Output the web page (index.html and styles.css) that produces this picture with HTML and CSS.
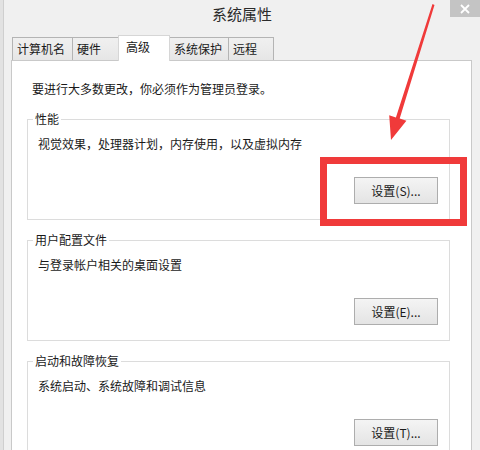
FILE: index.html
```html
<!DOCTYPE html>
<html lang="zh-CN">
<head>
<meta charset="utf-8">
<title>系统属性</title>
<link rel="stylesheet" href="styles.css">
</head>
<body>
<div class="screen">
  <div class="behind"></div>
  <div class="window">
    <div class="titlebar">
      <span></span>
      <div class="title">系统属性</div>
      <div class="close">
        <svg width="10" height="10" viewBox="0 0 10 10"><path d="M1 1L9 9M9 1L1 9" stroke="#fff" stroke-width="1.8" fill="none"/></svg>
      </div>
    </div>
    <div class="content">
      <div class="tabs">
        <div class="tab tab-name">计算机名</div>
        <div class="tab tab-hw">硬件</div>
        <div class="tab tab-adv active">高级</div>
        <div class="tab tab-prot">系统保护</div>
        <div class="tab tab-remote">远程</div>
      </div>
      <div class="panel">
        <p class="note">要进行大多数更改，你必须作为管理员登录。</p>
        <fieldset class="group">
          <legend>性能</legend>
          <p class="desc">视觉效果，处理器计划，内存使用，以及虚拟内存</p>
          <div class="actions"><button class="btn">设置(S)...</button></div>
        </fieldset>
        <fieldset class="group">
          <legend>用户配置文件</legend>
          <p class="desc">与登录帐户相关的桌面设置</p>
          <div class="actions"><button class="btn">设置(E)...</button></div>
        </fieldset>
        <fieldset class="group">
          <legend>启动和故障恢复</legend>
          <p class="desc">系统启动、系统故障和调试信息</p>
          <div class="actions"><button class="btn">设置(T)...</button></div>
        </fieldset>
      </div>
    </div>
  </div>
  <div class="highlight"></div>
  <svg class="arrow" width="480" height="450" viewBox="0 0 480 450">
    <polygon points="432.5,4 434.5,5 399.7,118.6 406.4,120.7 391,140 389.2,115.3 395.9,117.4" fill="#f03a3a"/>
  </svg>
</div>
</body>
</html>
```
FILE: styles.css
```css
* { box-sizing: border-box; }
html, body { margin: 0; padding: 0; }
body {
  width: 480px;
  height: 450px;
  overflow: hidden;
  background: #f0f0f0;
  font-family: "Noto Sans CJK SC", "Noto Sans", sans-serif;
  font-size: 12px;
  color: #1a1a1a;
}
.screen {
  position: relative;
  display: flex;
  width: 480px;
  height: 450px;
  overflow: hidden;
}
.behind {
  width: 4px;
  flex: none;
  background: #e2e2e2;
  border-right: 1px solid #cfcfcf;
}
.window {
  flex: 1;
  display: flex;
  flex-direction: column;
  background: #f0f0f0;
}
.titlebar {
  display: grid;
  grid-template-columns: 1fr auto 1fr;
  height: 30px;
}
.title {
  font-size: 15px;
  line-height: 28px;
  color: #2a2a2a;
}
.close {
  justify-self: end;
  width: 30px;
  height: 17px;
  background: #c4c4c4;
  display: flex;
  align-items: center;
  justify-content: center;
}
.content {
  padding: 7px 8px 0 7px;
  display: flex;
  flex-direction: column;
  flex: 1;
}
.tabs {
  display: flex;
  align-items: flex-end;
  height: 26px;
  margin-bottom: -1px;
  padding-left: 1px;
  position: relative;
  z-index: 1;
}
.tab {
  height: 23px;
  margin-bottom: 1px;
  border: 1px solid #b4b4b4;
  border-bottom: none;
  background: linear-gradient(#f0f0f0, #e6e6e6);
  padding: 3px 0 0 4px;
  line-height: 16px;
  white-space: nowrap;
}
.tab + .tab { margin-left: -1px; }
.tab-name { width: 61px; }
.tab-hw { width: 47px; }
.tab-adv { width: 52px; }
.tab-prot { width: 60px; }
.tab-remote { width: 46px; }
.tab.active {
  height: 26px;
  margin-bottom: 0;
  background: #fff;
  border-color: #d6d6d6;
  padding: 3px 0 0 7px;
  position: relative;
  z-index: 2;
}
.panel {
  flex: 1;
  background: #fff;
  border: 1px solid #c9c9c9;
  border-bottom: none;
  padding: 20px 21px 0 15px;
}
.note {
  margin: 0 0 14px 5px;
  line-height: 16px;
}
.group {
  margin: 0 0 12px 0;
  padding: 0 11px 15px 10px;
  border: 1px solid #dcdcdc;
  min-width: 0;
}
.group legend {
  margin-left: -5px;
  padding: 0 2px;
  line-height: 16px;
}
.desc {
  margin: 9px 0 0 0;
  line-height: 16px;
}
.actions {
  display: flex;
  justify-content: flex-end;
  margin-top: 25px;
}
.btn {
  width: 84px;
  height: 27px;
  border: 1px solid #adadad;
  background: linear-gradient(#f4f4f4, #e4e4e4);
  font-family: inherit;
  font-size: 12px;
  color: #1a1a1a;
  padding: 0;
}
.highlight {
  position: absolute;
  left: 320px;
  top: 157px;
  width: 147px;
  height: 69px;
  border: 7px solid #f03a3a;
}
.arrow {
  position: absolute;
  left: 0;
  top: 0;
  pointer-events: none;
}
```
